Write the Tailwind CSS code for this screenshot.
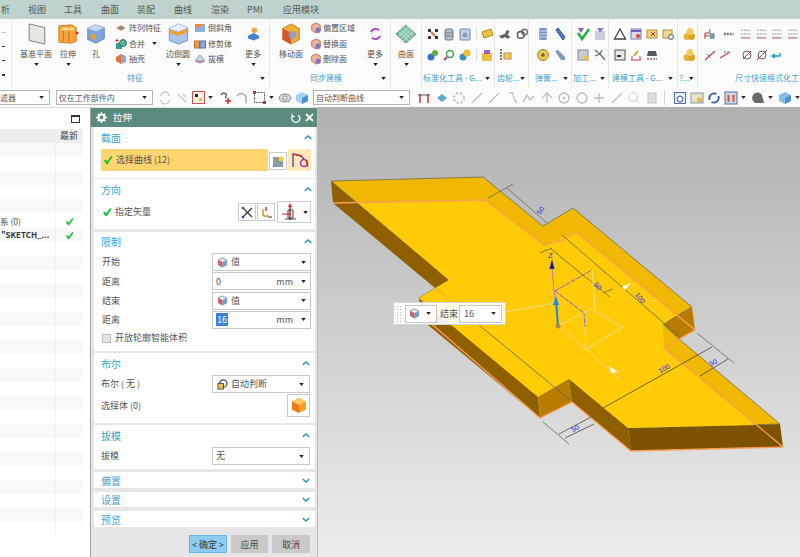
<!DOCTYPE html>
<html lang="zh">
<head>
<meta charset="UTF-8" />
<title>拉伸</title>
<script src="https://cdn.jsdelivr.net/npm/@tailwindcss/browser@4"></script>
</head>
<body class="w-[800px] h-[557px] overflow-hidden flex flex-col bg-white text-[#555] text-[9px] font-['Noto_Sans_CJK_SC','Noto_Sans',sans-serif]">

<!-- shared icons -->
<svg class="hidden">
  <symbol id="caret" viewBox="0 0 6 4"><path d="M0 0h6L3 4z" fill="#222"/></symbol>
  <symbol id="check" viewBox="0 0 10 10"><path d="M1 5.500l1.800-1 1.500 1.800L8 1l1.500 1L4.600 9.200H3.400z" fill="#19c23a"/></symbol>
  <symbol id="cube" viewBox="0 0 12 12"><path d="M6 1l4.500 2.200v5.400L6 11 1.500 8.600V3.200z" fill="#e8eef5" stroke="#7a8aa0"/><path d="M1.500 3.200L6 5.500v5.500L1.500 8.600z" fill="#d85c5c"/><path d="M6 5.500l4.500-2.300v5.400L6 11z" fill="#6f9fd8"/></symbol>
  <symbol id="gold" viewBox="0 0 14 14"><circle cx="5" cy="9.500" r="3.500" fill="#e6b93c"/><circle cx="9.500" cy="9.500" r="3.500" fill="#d9a520"/><circle cx="8" cy="4.500" r="3.500" fill="#f0cc60"/></symbol>
  <symbol id="num" viewBox="0 0 16 14"><path d="M3 3h10M3 7h10M3 11h10" stroke="#8a8a8a" stroke-dasharray="2 1"/><path d="M4 11h8" stroke="#d04040" stroke-dasharray="2 1"/></symbol>
  <symbol id="faintline" viewBox="0 0 14 14"><path d="M2 12L12 2" stroke="#bdbdbd" stroke-width="1.300"/></symbol>
  <symbol id="face" viewBox="0 0 14 14"><path d="M7 1l5 2.500v6L7 13 2 9.500v-6z" fill="#e9b7a0" stroke="#b87050"/><circle cx="9.500" cy="9.500" r="3" fill="#8a70c0"/></symbol>
  <symbol id="chev-up" viewBox="0 0 10 6"><path d="M1 5l4-4 4 4" fill="none" stroke="#2f8fc0" stroke-width="1.700"/></symbol>
  <symbol id="chev-down" viewBox="0 0 10 6"><path d="M1 1l4 4 4-4" fill="none" stroke="#2f8fc0" stroke-width="1.700"/></symbol>
</svg>

<!-- menu tabs -->
<nav class="h-[19px] shrink-0 bg-[#bfd2cd] flex items-center text-[9px] text-[#555]">
  <span class="w-[28px] pl-[1px]">析</span>
  <span class="w-[36px]">视图</span>
  <span class="w-[37px]">工具</span>
  <span class="w-[36px]">曲面</span>
  <span class="w-[37px]">装配</span>
  <span class="w-[37px]">曲线</span>
  <span class="w-[36px]">渲染</span>
  <span class="w-[36px]">PMI</span>
  <span>应用模块</span>
</nav>

<!-- ribbon -->
<section class="h-[69px] shrink-0 bg-[#fbfbfb] flex overflow-hidden text-[8px] leading-[12px]">
  <div class="w-[12px] shrink-0 border-r border-[#e6e6e6] flex flex-col justify-around items-end pr-[6px] py-[6px]">
    <span class="w-[3px] h-[1px] bg-[#bbb]"></span><span class="w-[3px] h-[1px] bg-[#333]"></span><span class="w-[3px] h-[1px] bg-[#333]"></span><span class="w-[3px] h-[2px] bg-[#333]"></span>
  </div>

  <!-- 特征 -->
  <div class="w-[258px] shrink-0 border-r border-[#e6e6e6] flex flex-col pb-[2px]">
    <div class="h-[48px] mt-[3px] flex pl-[7px]">
      <div class="w-[34px] flex flex-col items-center">
        <svg class="mt-[1px] w-[21px] h-[22px]" viewBox="0 0 22 24"><path d="M3 1l17 4v18L3 19z" fill="#e6e8e0" stroke="#777"/></svg>
        <span class="mt-[3px] whitespace-nowrap">基准平面</span>
        <svg class="w-[5px] h-[3px] mt-[3px]"><use href="#caret"/></svg>
      </div>
      <div class="w-[30px] flex flex-col items-center">
        <svg class="mt-[1px] w-[22px] h-[22px]" viewBox="0 0 24 24"><path d="M2 3l14-1 5 3v15l-5 2-14-1z" fill="#f5a33c" stroke="#d87a20"/><path d="M7 4v16M13 3v18" stroke="#c9721a"/><path d="M5 5h14v3H5z" fill="#f8d688"/><circle cx="22" cy="11" r="1.500" fill="#e02020"/></svg>
        <span class="mt-[3px]">拉伸</span>
        <svg class="w-[5px] h-[3px] mt-[3px]"><use href="#caret"/></svg>
      </div>
      <div class="w-[26px] flex flex-col items-center">
        <svg class="mt-[1px] w-[22px] h-[22px]" viewBox="0 0 22 24"><path d="M2 6l8-4 10 3v12l-9 5-9-4z" fill="#7ea6dc" stroke="#5a7cb0"/><path d="M2 6l9 3 9-4-10-3z" fill="#c5d8f0"/><circle cx="8" cy="15" r="3" fill="#f5a020"/></svg>
        <span class="mt-[3px]">孔</span>
      </div>
      <div class="w-[48px] ml-[6px] flex flex-col gap-[3.500px] whitespace-nowrap">
        <div class="flex items-center gap-[2px]"><svg class="w-[12px] h-[12px]" viewBox="0 0 12 12"><path d="M1 6l5-3 5 3-5 3z" fill="#e89a40"/><path d="M3 6l3-1.500L9 6 6 8z" fill="#5a8ad0"/></svg>阵列特征</div>
        <div class="flex items-center gap-[2px]"><svg class="w-[12px] h-[12px]" viewBox="0 0 12 12"><rect x="1" y="5" width="6" height="6" fill="#3a9a8a"/><circle cx="8" cy="5" r="3.500" fill="#60b0a0" stroke="#2a7a6a"/><path d="M2 1v3M0.500 2.500h3" stroke="#e02020"/></svg>合并<svg class="w-[5px] h-[3px] ml-[5px]"><use href="#caret"/></svg></div>
        <div class="flex items-center gap-[2px]"><svg class="w-[12px] h-[12px]" viewBox="0 0 12 12"><path d="M1 4l5-3v10L1 8z" fill="#e87030"/><path d="M6 1l5 2v6l-5 2z" fill="#88a8d8"/></svg>抽壳</div>
      </div>
      <div class="w-[30px] flex flex-col items-center">
        <svg class="mt-[1px] w-[23px] h-[22px]" viewBox="0 0 24 24"><path d="M2 6l10-5 10 4v14l-10 4-10-4z" fill="#a9c6ea" stroke="#6a8fbf"/><path d="M2 6l10-5 10 4-10 4z" fill="#e8eef8"/><path d="M2 7l10 3 10-4v4l-10 4-10-3z" fill="#f0a030"/></svg>
        <span class="mt-[3px]">边倒圆</span>
        <svg class="w-[5px] h-[3px] mt-[3px]"><use href="#caret"/></svg>
      </div>
      <div class="w-[47px] ml-[1px] flex flex-col gap-[3.500px] whitespace-nowrap">
        <div class="flex items-center gap-[2px]"><svg class="w-[12px] h-[12px]" viewBox="0 0 12 12"><rect x="1" y="2" width="10" height="8" fill="#8fb0dc"/><path d="M1 2h10L1 7z" fill="#ee8a3a"/></svg>倒斜角</div>
        <div class="flex items-center gap-[2px]"><svg class="w-[12px] h-[12px]" viewBox="0 0 12 12"><rect x="0.500" y="3" width="5" height="7" fill="#e8a050" stroke="#c07030"/><rect x="6" y="3" width="5.500" height="7" fill="#8fa8dc" stroke="#5070b0"/></svg>修剪体</div>
        <div class="flex items-center gap-[2px]"><svg class="w-[12px] h-[12px]" viewBox="0 0 12 12"><path d="M1 8l5-6 5 6-5 2z" fill="#c8d8ec" stroke="#8098b8"/><path d="M3 8h6" stroke="#e04040"/></svg>拔模</div>
      </div>
      <div class="w-[24px] flex flex-col items-center">
        <svg class="mt-[1px] w-[15px] h-[22px]" viewBox="0 0 16 24"><circle cx="9" cy="8" r="3" fill="#f0a040"/><path d="M2 14l6-3 6 3v3l-6 2-6-2z" fill="#4a80d0"/></svg>
        <span class="mt-[3px]">更多</span>
        <svg class="w-[5px] h-[3px] mt-[3px]"><use href="#caret"/></svg>
      </div>
    </div>
    <div class="flex-1 flex items-center pl-[115px] pr-[4px] justify-between text-[#46a3cd]">特征<svg class="w-[5px] h-[3px]"><use href="#caret"/></svg></div>
  </div>

  <!-- 同步建模 -->
  <div class="w-[121px] shrink-0 border-r border-[#e6e6e6] flex flex-col pb-[2px]">
    <div class="h-[48px] mt-[3px] flex pl-[5px]">
      <div class="w-[32px] flex flex-col items-center">
        <svg class="mt-[1px] w-[22px] h-[22px]" viewBox="0 0 24 24"><path d="M3 6l9-5 9 5v12l-9 5-9-5z" fill="#f4b030" stroke="#b97a18"/><path d="M3 6l9 5v12l-9-5z" fill="#d8552c"/><path d="M14 8v10M9 13h10M10.500 9.500l7 7M17.500 9.500l-7 7" stroke="#9aa0b8" stroke-width="2"/></svg>
        <span class="mt-[3px] whitespace-nowrap">移动面</span>
      </div>
      <div class="w-[50px] ml-[3px] flex flex-col gap-[3.500px] whitespace-nowrap">
        <div class="flex items-center gap-[1px]"><svg class="w-[12px] h-[12px]"><use href="#face"/></svg>偏置区域</div>
        <div class="flex items-center gap-[1px]"><svg class="w-[12px] h-[12px]"><use href="#face"/></svg>替换面</div>
        <div class="flex items-center gap-[1px]"><svg class="w-[12px] h-[12px]"><use href="#face"/></svg>删除面</div>
      </div>
      <div class="w-[24px] ml-[3px] flex flex-col items-center">
        <svg class="mt-[1px] w-[15px] h-[22px]" viewBox="0 0 16 24"><path d="M3 10a5.500 5.500 0 0 1 9-2M13 14a5.500 5.500 0 0 1-9 2" fill="none" stroke="#b040c8" stroke-width="2"/></svg>
        <span class="mt-[3px]">更多</span>
        <svg class="w-[5px] h-[3px] mt-[3px]"><use href="#caret"/></svg>
      </div>
    </div>
    <div class="flex-1 flex items-center pl-[40px] pr-[4px] justify-between text-[#46a3cd]">同步建模<svg class="w-[5px] h-[3px]"><use href="#caret"/></svg></div>
  </div>

  <!-- 曲面 -->
  <div class="w-[31px] shrink-0 border-r border-[#e6e6e6] flex flex-col items-center pt-[5px]">
    <svg class="w-[24px] h-[20px]" viewBox="0 0 24 22"><path d="M1 11L12 1l11 10-11 10z" fill="#7cc0a0" stroke="#4a8a70"/><path d="M6.500 6l11 10M12 1l11 10M9 3.500l11 10M4 8.500l11 10M17.500 6l-11 10M15 3.500l-11 10M20 8.500l-11 10" stroke="#d8f0e0" stroke-width=".8"/></svg>
    <span class="mt-[4px]">曲面</span>
    <svg class="w-[5px] h-[3px] mt-[3px]"><use href="#caret"/></svg>
  </div>

  <!-- 标准化工具 -->
  <div class="w-[73px] shrink-0 border-r border-[#e6e6e6] flex flex-col pb-[2px]">
    <div class="h-[51px] pt-[8px] pl-[4px] grid grid-cols-[16px_16px_18px_18px] gap-y-[7px] content-start">
      <svg class="w-[14px] h-[14px]" viewBox="0 0 14 14"><path d="M2 2h3v3H2zM9 2h3v3H9zM2 9h3v3H2zM9 9h3v3H9z" fill="#333"/><path d="M5 5l4 4" stroke="#e07030" stroke-width="2"/></svg>
      <svg class="w-[14px] h-[14px]" viewBox="0 0 14 14"><rect x="3" y="2" width="8" height="11" rx="2" fill="#b8c0c8" stroke="#707880"/><path d="M3 6h8M3 9h8" stroke="#707880"/></svg>
      <svg class="w-[14px] h-[14px]" viewBox="0 0 14 14"><rect x="2" y="2" width="10" height="11" rx="1" fill="#c8d4e4" stroke="#7088a8"/><circle cx="7" cy="8" r="2.500" fill="#8aa0c0"/></svg>
      <svg class="w-[18px] h-[14px] border-l border-[#ddd] pl-[3px]" viewBox="0 0 14 14"><path d="M2 5l9-3 2 6-9 3z" fill="#f0c040" stroke="#b08a20"/></svg>
      <svg class="w-[14px] h-[14px]" viewBox="0 0 14 14"><circle cx="5" cy="9" r="3.500" fill="#3a70c8"/><circle cx="9" cy="5" r="3" fill="#60b040"/></svg>
      <svg class="w-[14px] h-[14px]" viewBox="0 0 14 14"><circle cx="8" cy="6" r="3.500" fill="#fff" stroke="#40a050" stroke-width="1.500"/><path d="M5 9l-3 3" stroke="#c04080" stroke-width="2"/></svg>
      <svg class="w-[14px] h-[14px]" viewBox="0 0 14 14"><circle cx="5" cy="9" r="3.500" fill="#3a90c0"/><circle cx="9" cy="5" r="3.500" fill="#e8c030"/></svg>
      <svg class="w-[18px] h-[14px] border-l border-[#ddd] pl-[3px]" viewBox="0 0 14 14"><path d="M2 5h10v8H2z" fill="#e8c040"/><path d="M4 2h6v4H4z" fill="#a060c0"/></svg>
    </div>
    <div class="flex-1 flex items-center pl-[1px] pr-[4px] justify-between text-[#46a3cd] whitespace-nowrap">标准化工具 - G...<svg class="w-[5px] h-[3px]"><use href="#caret"/></svg></div>
  </div>

  <!-- 齿轮 -->
  <div class="w-[34px] shrink-0 border-r border-[#e6e6e6] flex flex-col pb-[2px]">
    <div class="h-[51px] pt-[8px] pl-[3px] flex flex-col gap-[7px]">
      <div class="flex gap-[3px]">
        <svg class="w-[14px] h-[14px]" viewBox="0 0 14 14"><path d="M1 9l6-2 2-4 3 1-2 4 3 2-3 2-3-2-3 2z" fill="#606060"/></svg>
        <svg class="w-[14px] h-[14px]" viewBox="0 0 14 14"><circle cx="6" cy="8" r="3.500" fill="none" stroke="#505050" stroke-width="1.500"/><circle cx="10" cy="5" r="3" fill="none" stroke="#707070" stroke-width="1.500"/></svg>
      </div>
      <svg class="w-[14px] h-[14px]" viewBox="0 0 14 14"><path d="M3 1v12" stroke="#808080" stroke-dasharray="2 1" stroke-width="2"/><rect x="6" y="5" width="7" height="6" fill="#f0c860" stroke="#c09030"/></svg>
    </div>
    <div class="flex-1 flex items-center pl-[2px] pr-[3px] justify-between text-[#46a3cd] whitespace-nowrap">齿轮...<svg class="w-[5px] h-[3px]"><use href="#caret"/></svg></div>
  </div>

  <!-- 弹簧 -->
  <div class="w-[43px] shrink-0 border-r border-[#e6e6e6] flex flex-col pb-[2px]">
    <div class="h-[51px] pt-[8px] pl-[7px] grid grid-cols-[17px_14px] gap-y-[7px] content-start">
      <svg class="w-[14px] h-[14px]" viewBox="0 0 14 14"><rect x="3" y="1" width="8" height="12" rx="2" fill="#7a90c8"/><path d="M3 4h8M3 7h8M3 10h8" stroke="#d8e0f0"/></svg>
      <svg class="w-[14px] h-[14px]" viewBox="0 0 14 14"><path d="M3 3l2-2 7 9-2 3z" fill="#4a80c8" stroke="#30508a"/></svg>
      <svg class="w-[14px] h-[14px]" viewBox="0 0 14 14"><circle cx="7" cy="7" r="5.500" fill="#e8c850" stroke="#a08830"/><circle cx="7" cy="7" r="1.800" fill="#706030"/></svg>
      <svg class="w-[14px] h-[14px]" viewBox="0 0 14 14"><path d="M2 3l3-1 7 7v3H8z" fill="#8098c0"/></svg>
    </div>
    <div class="flex-1 flex items-center pl-[6px] pr-[3px] justify-between text-[#46a3cd] whitespace-nowrap">弹簧...<svg class="w-[5px] h-[3px]"><use href="#caret"/></svg></div>
  </div>

  <!-- 加工 -->
  <div class="w-[37px] shrink-0 border-r border-[#e6e6e6] flex flex-col pb-[2px]">
    <div class="h-[51px] pt-[8px] pl-[4px] grid grid-cols-[17px_14px] gap-y-[7px] content-start">
      <svg class="w-[14px] h-[14px]" viewBox="0 0 14 14"><path d="M2 6l4 6 7-10" fill="none" stroke="#22b040" stroke-width="2.500"/><path d="M2 1h6L5 6z" fill="#8060c0"/></svg>
      <svg class="w-[14px] h-[14px]" viewBox="0 0 14 14"><rect x="2" y="4" width="10" height="9" fill="#c8d0dc"/><path d="M4 1l3 5 4-5z" fill="#9080c8"/></svg>
      <svg class="w-[14px] h-[14px]" viewBox="0 0 14 14"><rect x="2" y="2" width="10" height="10" fill="#c8ccd8" stroke="#8088a0"/><circle cx="10" cy="10" r="2.500" fill="#f0c040"/></svg>
      <svg class="w-[14px] h-[14px]" viewBox="0 0 14 14"><path d="M2 2l5 4 5 6M2 8l5-2 2-4" fill="none" stroke="#607868" stroke-width="1.300"/></svg>
    </div>
    <div class="flex-1 flex items-center pl-[1px] pr-[3px] justify-between text-[#46a3cd] whitespace-nowrap">加工...<svg class="w-[5px] h-[3px]"><use href="#caret"/></svg></div>
  </div>

  <!-- 建模工具 -->
  <div class="w-[69px] shrink-0 border-r border-[#e6e6e6] flex flex-col pb-[2px]">
    <div class="h-[51px] pt-[8px] pl-[4px] grid grid-cols-[16px_16px_16px_16px] gap-y-[7px] content-start">
      <svg class="w-[14px] h-[14px]" viewBox="0 0 14 14"><path d="M7 2l5.500 10h-11z" fill="none" stroke="#444" stroke-width="1.300"/></svg>
      <svg class="w-[14px] h-[14px]" viewBox="0 0 14 14"><rect x="2" y="2" width="10" height="10" fill="#d8dce8" stroke="#7878a8"/><path d="M2 4h10" stroke="#7060c0" stroke-width="2"/><circle cx="9" cy="9" r="2" fill="#d84040"/></svg>
      <svg class="w-[14px] h-[14px]" viewBox="0 0 14 14"><rect x="2" y="3" width="10" height="8" fill="#f0d080" stroke="#b89030"/><path d="M6 5l4 4M10 5l-4 4" stroke="#c03030"/></svg>
      <svg class="w-[14px] h-[14px]" viewBox="0 0 14 14"><rect x="2" y="3" width="9" height="8" fill="#f0d890" stroke="#a89040"/><circle cx="10" cy="10" r="2.500" fill="#e8e8e8" stroke="#606060"/></svg>
      <svg class="w-[14px] h-[14px]" viewBox="0 0 14 14"><rect x="2" y="2" width="10" height="10" fill="#e8e8e8" stroke="#505050"/><path d="M4 8h4" stroke="#303030" stroke-width="2"/></svg>
      <svg class="w-[14px] h-[14px]" viewBox="0 0 14 14"><path d="M2 12h10M3 8v4M11 8v4" stroke="#c04040"/><path d="M5 8l4-5" stroke="#d0a030" stroke-width="2"/></svg>
      <svg class="w-[14px] h-[14px]" viewBox="0 0 14 14"><path d="M3 3h8l1 5H2z" fill="#505860"/><path d="M2 11h10" stroke="#909090" stroke-dasharray="2 1" stroke-width="2"/></svg>
    </div>
    <div class="flex-1 flex items-center pl-[3px] pr-[4px] justify-between text-[#46a3cd] whitespace-nowrap">建模工具 - G...<svg class="w-[5px] h-[3px]"><use href="#caret"/></svg></div>
  </div>

  <!-- ? -->
  <div class="w-[20px] shrink-0 border-r border-[#e6e6e6] flex flex-col pb-[2px]">
    <div class="h-[51px] pt-[8px] pl-[4px] flex flex-col gap-[7px]">
      <svg class="w-[14px] h-[14px]"><use href="#gold"/></svg>
      <svg class="w-[14px] h-[14px]"><use href="#gold"/></svg>
    </div>
    <div class="flex-1 flex items-center pl-[1px] pr-[3px] justify-between text-[#46a3cd] whitespace-nowrap">?...<svg class="w-[5px] h-[3px]"><use href="#caret"/></svg></div>
  </div>

  <!-- 尺寸快速格式化工具 -->
  <div class="flex-1 min-w-0 flex flex-col pb-[2px]">
    <div class="h-[51px] pt-[8px] pl-[5px] flex flex-col gap-[7px]">
      <div class="flex items-center">
        <svg class="w-[14px] h-[14px] mr-[5px]" viewBox="0 0 14 14"><path d="M2 12V6h5V2M2 9h10" stroke="#c03030" fill="none"/><rect x="7" y="6" width="5" height="6" fill="#80a0a0"/></svg>
        <svg class="w-[14px] h-[14px] mr-[3px]" viewBox="0 0 14 14"><path d="M2 7h10" stroke="#777" stroke-width="2.500" stroke-dasharray="2 1"/></svg>
        <svg class="w-[16px] h-[14px]"><use href="#num"/></svg>
        <svg class="w-[16px] h-[14px]"><use href="#num"/></svg>
        <svg class="w-[16px] h-[14px]"><use href="#num"/></svg>
        <svg class="w-[16px] h-[14px]"><use href="#num"/></svg>
      </div>
      <div class="flex items-center">
        <svg class="w-[14px] h-[14px] mr-[1px]" viewBox="0 0 14 14"><path d="M2 12L12 3" stroke="#d04040" stroke-width="1.300"/><path d="M4 6l4 4" stroke="#808080"/></svg>
        <svg class="w-[14px] h-[14px] mr-[8px]" viewBox="0 0 14 14"><path d="M2 10L12 4" stroke="#d04040" stroke-width="1.300"/><path d="M6 4h5" stroke="#808080" stroke-dasharray="2 1"/></svg>
        <svg class="w-[14px] h-[14px] mr-[1px]" viewBox="0 0 14 14"><circle cx="7" cy="7" r="4" fill="none" stroke="#606060"/><path d="M3 11l8-8" stroke="#d03030"/></svg>
        <svg class="w-[14px] h-[14px] mr-[1px]" viewBox="0 0 14 14"><circle cx="7" cy="7" r="4" fill="none" stroke="#606060"/><path d="M2 12L12 2" stroke="#d03030"/></svg>
        <svg class="w-[12px] h-[14px]" viewBox="0 0 12 14"><path d="M10 5v3H3M5 6L2 8l3 2" fill="none" stroke="#2a9ac0" stroke-width="1.500"/></svg>
      </div>
    </div>
    <div class="flex-1 flex items-center pl-[37px] text-[#46a3cd] whitespace-nowrap">尺寸快速格式化工</div>
  </div>
</section>

<!-- selection bar -->
<section class="h-[19px] shrink-0 bg-[#fbfbfb] flex items-center text-[8px]">
  <div class="w-[50px] h-[15px] border border-l-0 border-[#b5b5b5] bg-white flex items-center justify-between pr-[5px]">滤器<svg class="w-[5px] h-[3px]"><use href="#caret"/></svg></div>
  <div class="w-[98px] h-[15px] ml-[6px] border border-[#b5b5b5] bg-white flex items-center justify-between pl-[2px] pr-[5px]">仅在工作部件内<svg class="w-[5px] h-[3px]"><use href="#caret"/></svg></div>
  <div class="w-[161px] flex items-center pl-[5px] gap-[3px]">
    <svg class="w-[14px] h-[14px]" viewBox="0 0 14 14"><path d="M3 5a4 4 0 0 1 8 0M3 9a4 4 0 0 0 8 0" fill="none" stroke="#c8c8c8" stroke-width="1.500"/></svg>
    <svg class="w-[14px] h-[14px]" viewBox="0 0 14 14"><path d="M3 3l4 4 4 4M8 3l3 3" stroke="#c8c8c8" stroke-width="1.300"/></svg>
    <svg class="w-[13px] h-[13px] border border-[#d85050] bg-[#f8f0e0]" viewBox="0 0 11 11"><rect x="2" y="2" width="3" height="3" fill="#222"/><rect x="6" y="6" width="3" height="3" fill="#e8c020"/></svg>
    <svg class="w-[5px] h-[3px] mr-[3px]"><use href="#caret"/></svg>
    <svg class="w-[13px] h-[14px]" viewBox="0 0 13 14"><path d="M2 4a3 3 0 0 1 5-1c1 1 0 3-1 4" fill="none" stroke="#555" stroke-width="1.200"/><path d="M6 10h6M9 7v6" stroke="#e02828" stroke-width="1.600"/></svg>
    <svg class="w-[14px] h-[14px]" viewBox="0 0 14 14"><path d="M2 5a5 5 0 0 1 9 1v6" fill="none" stroke="#bdbdbd" stroke-width="2"/></svg>
    <svg class="w-[13px] h-[13px] ml-[1px]" viewBox="0 0 13 13"><rect x="1.500" y="1.500" width="10" height="10" fill="none" stroke="#555" stroke-dasharray="2 1"/><rect x="0" y="0" width="3" height="3" fill="#d83030"/><rect x="10" y="10" width="3" height="3" fill="#d83030"/></svg>
    <svg class="w-[5px] h-[3px]"><use href="#caret"/></svg>
    <svg class="w-[14px] h-[14px] ml-[1px]" viewBox="0 0 14 14"><ellipse cx="7" cy="7" rx="6" ry="4" fill="#d8d8d8" stroke="#888"/><circle cx="7" cy="7" r="2" fill="#fff" stroke="#888"/></svg>
    <svg class="w-[14px] h-[14px]" viewBox="0 0 14 14"><path d="M7 1l6 3v6l-6 3-6-3V4z" fill="#a8d0f0"/><path d="M7 7l6-3v6l-6 3z" fill="#4a90d8"/></svg>
  </div>
  <div class="w-[98px] h-[15px] border border-[#b5b5b5] bg-white flex items-center justify-between pl-[2px] pr-[5px]">自动判断曲线<svg class="w-[5px] h-[3px]"><use href="#caret"/></svg></div>
  <div class="flex items-center pl-[7px] gap-[3.500px]">
    <svg class="w-[14px] h-[14px]" viewBox="0 0 14 14"><path d="M3 3v9M11 3v9" stroke="#d83030" stroke-width="1.500"/><path d="M1 4h12" stroke="#555"/></svg>
    <svg class="w-[14px] h-[14px]" viewBox="0 0 14 14"><path d="M2 7l5-4 5 4-5 4z" fill="#5ab0c8"/></svg>
    <svg class="w-[14px] h-[14px]" viewBox="0 0 14 14"><circle cx="7" cy="7" r="5" fill="none" stroke="#c0c0c0" stroke-dasharray="2 2" stroke-width="2"/></svg>
    <svg class="w-[14px] h-[14px]"><use href="#faintline"/></svg>
    <svg class="w-[14px] h-[14px]"><use href="#faintline"/></svg>
    <svg class="w-[14px] h-[14px]" viewBox="0 0 14 14"><path d="M4 2h4l1 6 3 4" fill="none" stroke="#bdbdbd" stroke-width="1.300"/></svg>
    <svg class="w-[14px] h-[14px]" viewBox="0 0 14 14"><path d="M1 11l4-7 3 5 4-4" fill="none" stroke="#bdbdbd" stroke-width="1.300"/></svg>
    <svg class="w-[14px] h-[14px]" viewBox="0 0 14 14"><path d="M7 2v10M2 7l5-5 5 5" fill="none" stroke="#bdbdbd" stroke-width="1.300"/></svg>
    <svg class="w-[14px] h-[14px]" viewBox="0 0 14 14"><circle cx="7" cy="7" r="5" fill="none" stroke="#bdbdbd" stroke-width="1.300"/><circle cx="7" cy="7" r="1.300" fill="#bdbdbd"/></svg>
    <svg class="w-[14px] h-[14px]" viewBox="0 0 14 14"><circle cx="7" cy="7" r="5" fill="none" stroke="#bdbdbd" stroke-width="1.300"/></svg>
    <svg class="w-[14px] h-[14px]" viewBox="0 0 14 14"><path d="M7 2v10M2 7h10" stroke="#bdbdbd" stroke-width="1.300"/></svg>
    <svg class="w-[14px] h-[14px]"><use href="#faintline"/></svg>
    <svg class="w-[14px] h-[14px]" viewBox="0 0 14 14"><circle cx="6" cy="6" r="4.500" fill="none" stroke="#cfcfcf"/><path d="M9 9l3 3" stroke="#cfcfcf"/></svg>
    <svg class="w-[14px] h-[14px]" viewBox="0 0 14 14"><rect x="3" y="2" width="8" height="10" fill="#ddd" stroke="#c4c4c4"/></svg>
  </div>
  <div class="w-[1px] h-[15px] bg-[#d5d5d5] ml-[5px] mr-[8px]"></div>
  <div class="flex items-center gap-[3px]">
    <svg class="w-[14px] h-[14px]" viewBox="0 0 14 14"><rect x="1.500" y="1.500" width="11" height="11" fill="#e8ecf4" stroke="#5070b0"/><circle cx="7" cy="8" r="3" fill="none" stroke="#4a5a7a"/></svg>
    <svg class="w-[14px] h-[14px]" viewBox="0 0 14 14"><rect x="1" y="2" width="12" height="10" fill="#e8e0c8" stroke="#8898b0"/><rect x="7" y="7" width="5" height="4" fill="#e8c040"/></svg>
    <svg class="w-[14px] h-[14px]" viewBox="0 0 14 14"><path d="M2.500 9a5 5 0 0 1 7-6M11.500 5a5 5 0 0 1-7 6" fill="none" stroke="#3a5a90" stroke-width="1.700"/></svg>
    <svg class="w-[14px] h-[14px]" viewBox="0 0 14 14"><rect x="1" y="1" width="12" height="12" fill="#cfd8ec" stroke="#5070a8"/><path d="M4.500 4v7M9.500 4v7" stroke="#e05020" stroke-width="2"/></svg>
    <svg class="w-[5px] h-[3px] mr-[2px]"><use href="#caret"/></svg>
    <svg class="w-[14px] h-[14px]" viewBox="0 0 14 14"><path d="M2 10a5 5 0 0 1 9-6l2 8H4z" fill="#6a6a6a"/></svg>
    <svg class="w-[5px] h-[3px] mr-[2px]"><use href="#caret"/></svg>
    <svg class="w-[14px] h-[14px]" viewBox="0 0 14 14"><path d="M7 1l6 3v6l-6 3-6-3V4z" fill="#8abce8"/><path d="M7 7l6-3v6l-6 3z" fill="#5090d0"/></svg>
    <svg class="w-[5px] h-[3px]"><use href="#caret"/></svg>
  </div>
</section>

<main class="h-[450px] flex overflow-hidden">
  <!-- part navigator -->
  <aside class="w-[91px] shrink-0 bg-white border-t border-r border-t-[#d8d8d8] border-r-[#a0a0a0] pr-[7px] flex flex-col">
    <div class="h-[21px] flex items-center justify-end pr-[3px]">
      <span class="w-[9px] h-[8px] border border-[#333] border-t-2"></span>
    </div>
    <div class="h-[14px] flex bg-[#eeeeee]">
      <div class="w-[55px]"></div>
      <div class="flex-1 pl-[5px] leading-[14px] text-[#444]">最新</div>
    </div>
    <div class="flex-1 overflow-hidden text-[8.500px] leading-[14px]">
      <div class="h-[14px] flex odd:bg-[#f8f8f8]"><div class="w-[55px]"></div><div class="flex-1 border-l border-[#f0f0f0]"></div></div>
      <div class="h-[14px] flex odd:bg-[#f8f8f8]"><div class="w-[55px]"></div><div class="flex-1 border-l border-[#f0f0f0]"></div></div>
      <div class="h-[14px] flex odd:bg-[#f8f8f8]"><div class="w-[55px]"></div><div class="flex-1 border-l border-[#f0f0f0]"></div></div>
      <div class="h-[14px] flex odd:bg-[#f8f8f8]"><div class="w-[55px]"></div><div class="flex-1 border-l border-[#f0f0f0]"></div></div>
      <div class="h-[14px] flex odd:bg-[#f8f8f8]"><div class="w-[55px]"></div><div class="flex-1 border-l border-[#f0f0f0]"></div></div>
      <div class="h-[14px] flex mt-[1px] odd:bg-[#f8f8f8]"><div class="w-[55px]">系 (0)</div><div class="flex-1 border-l border-[#f0f0f0] flex items-center justify-center"><svg class="w-[9px] h-[9px]"><use href="#check"/></svg></div></div>
      <div class="h-[14px] flex odd:bg-[#f8f8f8]"><div class="w-[55px] pl-[1px] font-bold text-[8px] text-[#333] whitespace-nowrap">"SKETCH_...</div><div class="flex-1 border-l border-[#f0f0f0] flex items-center justify-center"><svg class="w-[9px] h-[9px]"><use href="#check"/></svg></div></div>
      <div class="h-[14px] flex odd:bg-[#f8f8f8]"><div class="w-[55px]"></div><div class="flex-1 border-l border-[#f0f0f0]"></div></div>
      <div class="h-[14px] flex odd:bg-[#f8f8f8]"><div class="w-[55px]"></div><div class="flex-1 border-l border-[#f0f0f0]"></div></div>
      <div class="h-[14px] flex odd:bg-[#f8f8f8]"><div class="w-[55px]"></div><div class="flex-1 border-l border-[#f0f0f0]"></div></div>
      <div class="h-[14px] flex odd:bg-[#f8f8f8]"><div class="w-[55px]"></div><div class="flex-1 border-l border-[#f0f0f0]"></div></div>
      <div class="h-[14px] flex odd:bg-[#f8f8f8]"><div class="w-[55px]"></div><div class="flex-1 border-l border-[#f0f0f0]"></div></div>
      <div class="h-[14px] flex odd:bg-[#f8f8f8]"><div class="w-[55px]"></div><div class="flex-1 border-l border-[#f0f0f0]"></div></div>
      <div class="h-[14px] flex odd:bg-[#f8f8f8]"><div class="w-[55px]"></div><div class="flex-1 border-l border-[#f0f0f0]"></div></div>
      <div class="h-[14px] flex odd:bg-[#f8f8f8]"><div class="w-[55px]"></div><div class="flex-1 border-l border-[#f0f0f0]"></div></div>
      <div class="h-[14px] flex odd:bg-[#f8f8f8]"><div class="w-[55px]"></div><div class="flex-1 border-l border-[#f0f0f0]"></div></div>
      <div class="h-[14px] flex odd:bg-[#f8f8f8]"><div class="w-[55px]"></div><div class="flex-1 border-l border-[#f0f0f0]"></div></div>
      <div class="h-[14px] flex odd:bg-[#f8f8f8]"><div class="w-[55px]"></div><div class="flex-1 border-l border-[#f0f0f0]"></div></div>
      <div class="h-[14px] flex odd:bg-[#f8f8f8]"><div class="w-[55px]"></div><div class="flex-1 border-l border-[#f0f0f0]"></div></div>
      <div class="h-[14px] flex odd:bg-[#f8f8f8]"><div class="w-[55px]"></div><div class="flex-1 border-l border-[#f0f0f0]"></div></div>
      <div class="h-[14px] flex odd:bg-[#f8f8f8]"><div class="w-[55px]"></div><div class="flex-1 border-l border-[#f0f0f0]"></div></div>
      <div class="h-[14px] flex odd:bg-[#f8f8f8]"><div class="w-[55px]"></div><div class="flex-1 border-l border-[#f0f0f0]"></div></div>
      <div class="h-[14px] flex odd:bg-[#f8f8f8]"><div class="w-[55px]"></div><div class="flex-1 border-l border-[#f0f0f0]"></div></div>
      <div class="h-[14px] flex odd:bg-[#f8f8f8]"><div class="w-[55px]"></div><div class="flex-1 border-l border-[#f0f0f0]"></div></div>
      <div class="h-[14px] flex odd:bg-[#f8f8f8]"><div class="w-[55px]"></div><div class="flex-1 border-l border-[#f0f0f0]"></div></div>
      <div class="h-[14px] flex odd:bg-[#f8f8f8]"><div class="w-[55px]"></div><div class="flex-1 border-l border-[#f0f0f0]"></div></div>
      <div class="h-[14px] flex odd:bg-[#f8f8f8]"><div class="w-[55px]"></div><div class="flex-1 border-l border-[#f0f0f0]"></div></div>
      <div class="h-[14px] flex odd:bg-[#f8f8f8]"><div class="w-[55px]"></div><div class="flex-1 border-l border-[#f0f0f0]"></div></div>
    </div>
  </aside>

  <!-- extrude dialog -->
  <div class="w-[227px] shrink-0 bg-[#e6e6e6] flex flex-col border-r border-[#bbb]">
    <div class="h-[19px] mt-[1px] shrink-0 bg-[#5b8a7f] text-white flex items-center pl-[5px] pr-[3px]">
      <svg class="w-[11px] h-[11px]" viewBox="0 0 12 12"><circle cx="6" cy="6" r="3.300" fill="none" stroke="#fff" stroke-width="2.400"/><path d="M6 0v2M6 10v2M0 6h2M10 6h2M1.800 1.800l1.400 1.400M8.800 8.800l1.400 1.400M1.800 10.200l1.400-1.400M8.800 3.200l1.400-1.400" stroke="#fff" stroke-width="1.500"/></svg>
      <span class="ml-[6px] text-[9.500px]">拉伸</span>
      <svg class="w-[10px] h-[10px] ml-auto" viewBox="0 0 10 10"><path d="M2 2.500a4 4 0 1 0 5-.5" fill="none" stroke="#fff" stroke-width="1.300"/><path d="M1 0.500v3h3" fill="none" stroke="#fff" stroke-width="1"/></svg>
      <svg class="w-[9px] h-[9px] ml-[4px]" viewBox="0 0 9 9"><path d="M1 1l7 7M8 1L1 8" stroke="#fff" stroke-width="1.800"/></svg>
    </div>

    <div class="flex-1 pl-[3px] pr-[2px] flex flex-col">
      <!-- 截面 -->
      <section class="h-[51px] bg-white pl-[7px] pr-[4px] pt-[2px]">
        <div class="flex items-center justify-between h-[17px] text-[#46a3cd] text-[10px]">截面<svg class="w-[8px] h-[5px] mr-[-1px]"><use href="#chev-up"/></svg></div>
        <div class="flex h-[22px] mt-[3px] gap-[1px]">
          <div class="w-[167px] bg-[#fdd46e] flex items-center pl-[1px] gap-[3px]"><svg class="w-[10px] h-[10px] ml-[1px]"><use href="#check"/></svg>选择曲线 (12)</div>
          <div class="w-[18px] h-[18px] mt-[3px] border border-[#ccc] bg-white flex items-center justify-center"><svg class="w-[13px] h-[13px]" viewBox="0 0 13 13"><rect x="1" y="2" width="10" height="10" fill="#8c9aa8"/><circle cx="9" cy="4" r="2.500" fill="#f0d030"/></svg></div>
          <div class="w-[23px] bg-[#fde8b8] flex items-center justify-center"><svg class="w-[20px] h-[18px]" viewBox="0 0 20 18"><path d="M3 16V3l8 2 3 3" fill="none" stroke="#3030b0" stroke-width="1.200"/><path d="M3 3l9 2" stroke="#d82020" stroke-width="1.400"/><circle cx="14" cy="12" r="3.500" fill="none" stroke="#c03090" stroke-width="1.500"/><path d="M16 9l2 7" stroke="#d82020"/></svg></div>
        </div>
      </section>

      <!-- 方向 -->
      <section class="h-[50px] mt-[1px] bg-white pl-[7px] pr-[4px] pt-[2px]">
        <div class="flex items-center justify-between h-[17px] text-[#46a3cd] text-[10px]">方向<svg class="w-[8px] h-[5px] mr-[-1px]"><use href="#chev-up"/></svg></div>
        <div class="flex items-center h-[24px] mt-[2px]">
          <svg class="w-[10px] h-[10px] ml-[1px] mr-[3px]"><use href="#check"/></svg>指定矢量
          <div class="ml-auto flex items-center gap-[1px]">
            <div class="w-[18px] h-[18px] border border-[#ccc] flex items-center justify-center"><svg class="w-[13px] h-[13px]" viewBox="0 0 13 13"><path d="M2 2l9 9M11 2l-9 9" stroke="#333" stroke-width="1.200"/><circle cx="2" cy="2" r="1.300" fill="#3040c0"/><circle cx="2" cy="11" r="1.300" fill="#3040c0"/></svg></div>
            <div class="w-[18px] h-[18px] border border-[#ccc] flex items-center justify-center"><svg class="w-[13px] h-[13px]" viewBox="0 0 13 13"><path d="M3 3v6a3 3 0 0 0 5 0" fill="none" stroke="#e8901c" stroke-width="1.500"/><path d="M6 1v4" stroke="#d82020" stroke-width="1.400"/><path d="M8 11h4" stroke="#333"/></svg></div>
            <div class="w-[34px] h-[22px] ml-[1px] border border-[#ccc] flex items-center pl-[2px] gap-[3px]"><svg class="w-[20px] h-[20px]" viewBox="0 0 20 20"><path d="M10 18V3" stroke="#d82020" stroke-width="1.500"/><path d="M10 1l-2 4h4z" fill="#d82020"/><path d="M2 12h9" stroke="#d82020"/><path d="M8 8h5v8H8zM5 17h11" fill="none" stroke="#444"/></svg><svg class="w-[5px] h-[3px]"><use href="#caret"/></svg></div>
          </div>
        </div>
      </section>

      <!-- 限制 -->
      <section class="h-[119px] mt-[3px] bg-white pl-[7px] pr-[4px] pt-[1px]">
        <div class="flex items-center justify-between h-[17px] text-[#46a3cd] text-[10px]">限制<svg class="w-[8px] h-[5px] mr-[-1px]"><use href="#chev-up"/></svg></div>
        <div class="mt-[3px] flex flex-col gap-[1.300px]">
          <div class="flex items-center h-[18px] pl-[1px] justify-between">开始
            <div class="w-[99px] h-[18px] border border-[#c8c8c8] flex items-center pl-[4px] pr-[4px]"><svg class="w-[11px] h-[11px] mr-[3px]"><use href="#cube"/></svg>值<svg class="w-[5px] h-[3px] ml-auto"><use href="#caret"/></svg></div>
          </div>
          <div class="flex items-center h-[18px] pl-[1px] justify-between">距离
            <div class="w-[99px] h-[18px] border border-[#c8c8c8] flex items-center pl-[3px] pr-[4px]">0<span class="ml-auto mr-[8px]">mm</span><svg class="w-[5px] h-[3px]"><use href="#caret"/></svg></div>
          </div>
          <div class="flex items-center h-[18px] pl-[1px] justify-between">结束
            <div class="w-[99px] h-[18px] border border-[#c8c8c8] flex items-center pl-[4px] pr-[4px]"><svg class="w-[11px] h-[11px] mr-[3px]"><use href="#cube"/></svg>值<svg class="w-[5px] h-[3px] ml-auto"><use href="#caret"/></svg></div>
          </div>
          <div class="flex items-center h-[18px] pl-[1px] justify-between">距离
            <div class="w-[99px] h-[18px] border border-[#c8c8c8] flex items-center pl-[3px] pr-[4px]"><span class="bg-[#3b7fd8] text-white leading-[13px] px-[1px]">16</span><span class="ml-auto mr-[8px]">mm</span><svg class="w-[5px] h-[3px]"><use href="#caret"/></svg></div>
          </div>
          <div class="flex items-center h-[16px] pl-[1px] gap-[4px]"><span class="w-[9px] h-[9px] border border-[#bbb] bg-[#e6e6e6]"></span>开放轮廓智能体积</div>
        </div>
      </section>

      <!-- 布尔 -->
      <section class="h-[70px] mt-[2px] bg-white pl-[7px] pr-[5px] pt-[2px]">
        <div class="flex items-center justify-between h-[17px] text-[#46a3cd] text-[10px]">布尔<svg class="w-[8px] h-[5px]"><use href="#chev-up"/></svg></div>
        <div class="flex items-center h-[18px] mt-[3px] justify-between">布尔 ( 无 )
          <div class="w-[98px] h-[18px] border border-[#c8c8c8] flex items-center pl-[4px] pr-[5px]"><svg class="w-[11px] h-[11px] mr-[3px]" viewBox="0 0 12 12"><circle cx="7" cy="5" r="4" fill="none" stroke="#444" stroke-width="1.300"/><rect x="1" y="5" width="6" height="6" fill="#f0c060" stroke="#444"/></svg>自动判断<svg class="w-[5px] h-[3px] ml-auto"><use href="#caret"/></svg></div>
        </div>
        <div class="flex items-center h-[23px] mt-[1px] justify-between">选择体 (0)
          <div class="w-[23px] h-[23px] border border-[#c8c8c8] flex items-center justify-center"><svg class="w-[16px] h-[17px]" viewBox="0 0 16 17"><path d="M8 1l7 3.500v8L8 16l-7-3.500v-8z" fill="#f5a020"/><path d="M1 4.500L8 8v8l-7-3.500z" fill="#f07818"/><path d="M8 1l7 3.500L8 8 1 4.500z" fill="#fcc860"/></svg></div>
        </div>
      </section>

      <!-- 拔模 -->
      <section class="h-[44px] mt-[2px] bg-white pl-[7px] pr-[5px] pt-[2px]">
        <div class="flex items-center justify-between h-[17px] text-[#46a3cd] text-[10px]">拔模<svg class="w-[8px] h-[5px]"><use href="#chev-up"/></svg></div>
        <div class="flex items-center h-[18px] mt-[3px] justify-between">拔模
          <div class="w-[98px] h-[18px] border border-[#c8c8c8] flex items-center pl-[3px] pr-[5px]">无<svg class="w-[5px] h-[3px] ml-auto"><use href="#caret"/></svg></div>
        </div>
      </section>

      <section class="h-[16px] mt-[3px] bg-white pl-[7px] pr-[5px] flex items-center justify-between text-[#46a3cd] text-[10px]">偏置<svg class="w-[8px] h-[5px]"><use href="#chev-down"/></svg></section>
      <section class="h-[15px] mt-[4px] bg-white pl-[7px] pr-[5px] flex items-center justify-between text-[#46a3cd] text-[10px]">设置<svg class="w-[8px] h-[5px]"><use href="#chev-down"/></svg></section>
      <section class="h-[16px] mt-[4px] bg-white pl-[7px] pr-[5px] flex items-center justify-between text-[#46a3cd] text-[10px]">预览<svg class="w-[8px] h-[5px]"><use href="#chev-down"/></svg></section>

      <div class="flex justify-end gap-[4px] mt-[8px] pr-[5px]">
        <button class="w-[38px] h-[18px] bg-[#8fcdf0] border border-[#6cb4e0] text-[#333] leading-none">&lt; 确定 &gt;</button>
        <button class="w-[37px] h-[18px] bg-[#c9c9c9] text-[#444] leading-none">应用</button>
        <button class="w-[38px] h-[18px] bg-[#c9c9c9] text-[#444] leading-none">取消</button>
      </div>
    </div>
  </div>

  <!-- graphics window -->
  <div class="relative flex-1 bg-linear-to-b from-[#b0b0b0] via-[#cfcfcf] to-[#ececec]">
    <svg class="absolute inset-0 w-[482px] h-[450px]" viewBox="318 107 482 450">
      <!-- walls -->
      <path d="M331 181L333 203 435 288 449 280z" fill="#8f5f00"/>
      <path d="M419 298L538 397 540 418 422 320z" fill="#8f5f00"/>
      <path d="M569 379L538 397 540 418 572 402z" fill="#b87c00"/>
      <path d="M569 379L628 428 631 451 572 402z" fill="#8f5f00"/>
      <path d="M628 428L780 424 783 447 631 451z" fill="#7d5200"/>
      <path d="M663 324L692 307 695 330 679 339z" fill="#b87c00"/>
      <!-- top face -->
      <path d="M331 181L483 177 543 226 573 208 692 307 663 324 679 339 780 424 628 428 569 379 538 397 419 298 449 280z" fill="#f0b800" stroke="#6d6d50" stroke-width=".8"/>
      <path d="M358 203L485 200 544 245 576 232 677 315 663 324 664 348 755 425 628 428 569 379 538 397 419 298 449 280z" fill="#ffcb05"/>
      <!-- bottom sketch seen through the preview -->
      <path d="M333 203L485 200 544 245 563 240 576 232 695 330 679 339 664 348 783 447 631 451 572 402 540 418 419 313" fill="none" stroke="#fb9f50" stroke-width="1.300"/>
      <path d="M435 288L452 303" stroke="#fb9f50" stroke-width="1"/>
      <!-- dimensions -->
      <g fill="none" stroke-width=".8">
        <path d="M488 198L513 184M540 253L552 248M603 293L613 289M697 333L734 363M543 422L569 444M479 325L570 400M610 297L551 249M562 235L680 337M507 188L547 223" stroke="#5b6b55"/>
        <path d="M603 408L712 347M728 359L700 376M559 434L591 417M565 438L594 424" stroke="#4a4a3a"/>
      </g>
      <g fill="#2a2aee" font-size="7" font-family="Liberation Sans, sans-serif">
        <text x="536" y="213" transform="rotate(-55 540 210)">50</text>
        <text x="594" y="289" transform="rotate(50 598 286)">50</text>
        <text x="635" y="300" transform="rotate(50 640 297)">100</text>
        <text x="658" y="371" transform="rotate(-30 664 368)">100</text>
        <text x="709" y="365" transform="rotate(-30 713 362)">50</text>
        <text x="571" y="431" transform="rotate(-30 575 428)">50</text>
      </g>
      <!-- csys -->
      <g fill="none">
        <path d="M558 326L591 309 623 327 586 349zM592 270L595 308M586 349L584 313M586 349L620 380M505 312L555 303" stroke="#f0dc90" stroke-width="1"/>
        <path d="M555 291L592 270M555 291L584 313 585 327" stroke="#8a5ce0" stroke-width="1" stroke-dasharray="5 1"/>
        <path d="M558 326L556 300" stroke="#1c86e0" stroke-width="2"/>
        <path d="M555 300L552 268" stroke="#b080d0" stroke-width="1"/>
      </g>
      <path d="M556 296l-3 9h6z" fill="#1c86e0"/>
      <path d="M552 259l-2.500 10h5z" fill="#1a1ab8"/>
      <text x="548" y="258" font-size="8" fill="#5a2ad8" font-family="Liberation Sans, sans-serif">Z</text>
      <circle cx="558" cy="326" r="2.500" fill="#a88c50"/>
      <path d="M609 366l9 6-6 1z" fill="#fff"/>
      <path d="M622 287l9-4-6 7z" fill="#fff"/>
    </svg>

    <!-- on-screen input box -->
    <div class="absolute left-[75px] top-[195px] w-[113px] h-[23px] bg-white/90 border border-[#d5d5d5] flex items-center pl-[2px]">
      <span class="w-[6px] h-[17px] bg-[radial-gradient(#bbb_35%,transparent_40%)] bg-[length:3px_3px]"></span>
      <div class="w-[32px] h-[18px] ml-[3px] border border-[#c8c8c8] bg-white flex items-center pl-[3px] gap-[6px]"><svg class="w-[11px] h-[11px]"><use href="#cube"/></svg><svg class="w-[5px] h-[3px]"><use href="#caret"/></svg></div>
      <span class="ml-[3px]">结束</span>
      <div class="w-[43px] h-[18px] ml-[1px] border border-[#c8c8c8] bg-white flex items-center pl-[4px] pr-[5px] justify-between">16<svg class="w-[5px] h-[3px]"><use href="#caret"/></svg></div>
    </div>
  </div>
</main>
</body>
</html>
